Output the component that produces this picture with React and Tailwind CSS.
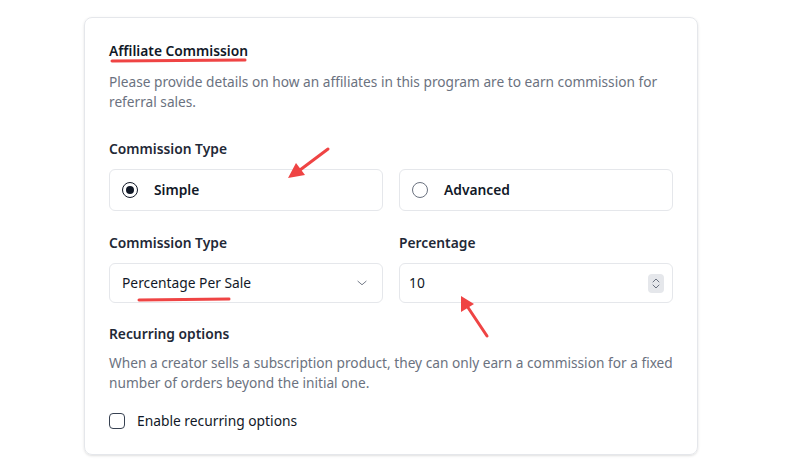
import React from 'react';

const Radio = ({ checked, label }) => (
  <label className="flex items-center h-[42px] px-3 gap-4 border border-[#e5e7eb] rounded-md bg-white">
    <span
      className={`w-4 h-4 rounded-full border-[1.5px] flex items-center justify-center ${
        checked ? 'border-[#111827]' : 'border-[#6b7280]'
      }`}
    >
      {checked && <span className="w-2 h-2 rounded-full bg-[#111827]" />}
    </span>
    <span className="text-[13.8px] font-semibold text-[#111827]">{label}</span>
  </label>
);

const App = () => {
  return (
    <div className="relative w-full h-[471px] bg-white" style={{ fontFamily: '"Noto Sans", sans-serif' }}>
      <div className="ml-[84px] pt-[17px]">
        <section className="w-[614px] border border-[#e5e7eb] rounded-lg shadow-sm px-6 pt-[23px] pb-[23px]">
          <h2 className="text-[13.8px] font-semibold text-[#111827] leading-5">Affiliate Commission</h2>
          <p className="mt-[11px] text-[13.7px] leading-5 text-[#6b7280]">
            Please provide details on how an affiliates in this program are to earn commission for referral sales.
          </p>

          <div className="mt-[27px]">
            <p className="text-[13.8px] font-semibold text-[#1f2937] leading-5">Commission Type</p>
            <div className="mt-[10px] grid grid-cols-2 gap-4">
              <Radio checked label="Simple" />
              <Radio label="Advanced" />
            </div>
          </div>

          <div className="mt-[22px] grid grid-cols-2 gap-4">
            <div>
              <p className="text-[13.8px] font-semibold text-[#1f2937] leading-5">Commission Type</p>
              <div className="mt-[10px] h-10 border border-[#e5e7eb] rounded-md flex items-center justify-between pl-3 pr-[13px]">
                <span className="text-[13.8px] text-[#111827]">Percentage Per Sale</span>
                <svg width="14" height="14" viewBox="0 0 24 24" fill="none" stroke="#6b7280" strokeWidth="1.6" strokeLinecap="round" strokeLinejoin="round">
                  <path d="M5 9l7 6 7-6" />
                </svg>
              </div>
            </div>
            <div>
              <p className="text-[13.8px] font-semibold text-[#1f2937] leading-5">Percentage</p>
              <div className="mt-[10px] h-10 border border-[#e5e7eb] rounded-md flex items-center justify-between pl-[9px] pr-2">
                <span className="text-[13.8px] text-[#111827]">10</span>
                <span className="w-4 h-[19px] bg-[#e5e7eb] rounded-sm flex flex-col items-center justify-center gap-[1px]">
                  <svg width="8" height="6" viewBox="0 0 8 6" fill="none" stroke="#6b7280" strokeWidth="1" strokeLinecap="round">
                    <path d="M1 5l3-3 3 3" />
                  </svg>
                  <svg width="8" height="6" viewBox="0 0 8 6" fill="none" stroke="#6b7280" strokeWidth="1" strokeLinecap="round">
                    <path d="M1 1l3 3 3-3" />
                  </svg>
                </span>
              </div>
            </div>
          </div>

          <div className="mt-[21px]">
            <p className="text-[13.8px] font-semibold text-[#1f2937] leading-5">Recurring options</p>
            <p className="mt-[9px] text-[13.7px] leading-5 text-[#6b7280]">
              When a creator sells a subscription product, they can only earn a commission for a fixed number of orders beyond the initial one.
            </p>
            <label className="mt-[18px] flex items-center gap-3">
              <span className="w-4 h-4 border-[1.5px] border-[#374151] rounded-[4px]" />
              <span className="text-[13.8px] text-[#111827] leading-5">Enable recurring options</span>
            </label>
          </div>
        </section>
      </div>

      <svg className="absolute inset-0 pointer-events-none" width="800" height="471" viewBox="0 0 800 471">
        <line x1="112" y1="61" x2="245" y2="60" stroke="#ef4444" strokeWidth="3" strokeLinecap="round" />
        <line x1="139" y1="300" x2="229" y2="299" stroke="#ef4444" strokeWidth="3" strokeLinecap="round" />
        <line x1="328" y1="149" x2="300" y2="170" stroke="#ef4444" strokeWidth="3" strokeLinecap="round" />
        <polygon points="288,178 296,163 305,175" fill="#ef4444" />
        <line x1="487" y1="336" x2="467" y2="306" stroke="#ef4444" strokeWidth="3" strokeLinecap="round" />
        <polygon points="461,296 461,312 474,304" fill="#ef4444" />
      </svg>
    </div>
  );
};

export default App;
